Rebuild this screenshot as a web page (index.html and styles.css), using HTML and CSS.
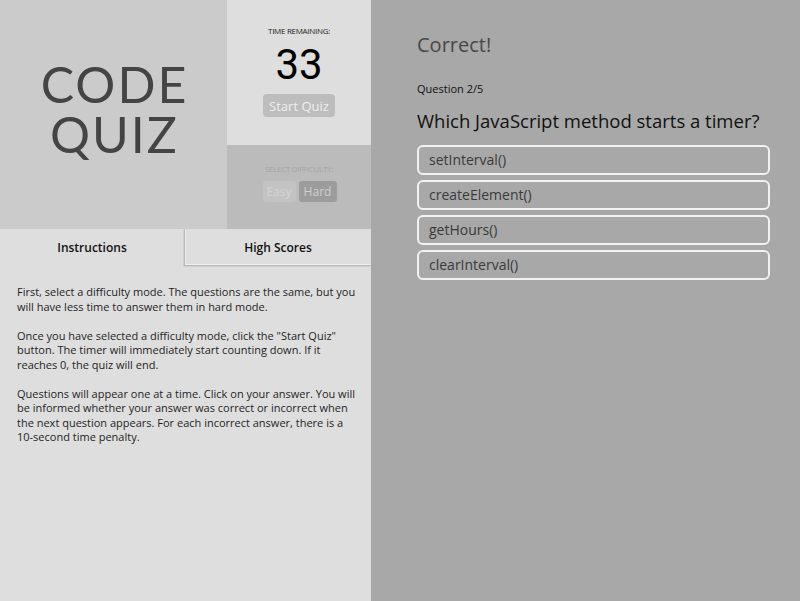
FILE: index.html
```html
<!DOCTYPE html>
<html>
<head>
<meta charset="utf-8">
<link rel="stylesheet" href="styles.css">
</head>
<body>
<div class="app">
  <aside class="side">
    <div class="top">
      <div class="logo"><h1 class="logo-text">CODE<br>QUIZ</h1></div>
      <div class="controls">
        <div class="timer">
          <div class="label">TIME REMAINING:</div>
          <div class="count">33</div>
          <button class="start">Start Quiz</button>
        </div>
        <div class="difficulty">
          <div class="label dim">SELECT DIFFICULTY:</div>
          <div class="modes">
            <button class="mode easy">Easy</button>
            <button class="mode hard">Hard</button>
          </div>
        </div>
      </div>
    </div>
    <div class="tabs">
      <div class="tab active">Instructions</div>
      <div class="tab">High Scores</div>
    </div>
    <div class="instructions">
      <p>First, select a difficulty mode. The questions are the same, but you will have less time to answer them in hard mode.</p>
      <p>Once you have selected a difficulty mode, click the "Start Quiz" button. The timer will immediately start counting down. If it reaches 0, the quiz will end.</p>
      <p>Questions will appear one at a time. Click on your answer. You will be informed whether your answer was correct or incorrect when the next question appears. For each incorrect answer, there is a 10-second time penalty.</p>
    </div>
  </aside>
  <main class="main">
    <div class="feedback">Correct!</div>
    <div class="qnum">Question 2/5</div>
    <h2 class="question">Which JavaScript method starts a timer?</h2>
    <div class="answers">
      <button class="answer">setInterval()</button>
      <button class="answer">createElement()</button>
      <button class="answer">getHours()</button>
      <button class="answer">clearInterval()</button>
    </div>
  </main>
</div>
</body>
</html>
```
FILE: styles.css
```css
* { box-sizing: border-box; }
html, body { margin: 0; padding: 0; height: 100%; }
body { font-family: "Open Sans", sans-serif; }
.app { display: grid; grid-template-columns: 371px 1fr; height: 601px; }
.side { background: #dedede; display: flex; flex-direction: column; }
.top { display: grid; grid-template-columns: 227px 144px; height: 229px; }
.logo { background: #cbcbcb; display: flex; align-items: center; justify-content: center; padding-bottom: 12px; padding-left: 2px; }
.logo-text { margin: 0; text-align: center; font-family: "Lato", sans-serif; font-weight: 400; font-size: 50px; line-height: 50px; color: #444; letter-spacing: 2px; }
.controls { display: grid; grid-template-rows: 145px 84px; }
.timer { background: #dedede; display: flex; flex-direction: column; align-items: center; padding-top: 26px; }
.label { font-size: 8px; color: #222; letter-spacing: -0.3px; line-height: 10px; }
.label.dim { color: #a4a4a4; }
.count { font-family: "Roboto", sans-serif; font-size: 42px; line-height: 46px; color: #000; margin-top: 6px; }
.start { margin-top: 6px; background: #bdbdbd; color: #f0f0f0; border: none; border-radius: 4px; font-family: "Open Sans", sans-serif; font-size: 13px; width: 72px; height: 23px; padding: 0; }
.difficulty { background: #bbbbbb; display: flex; flex-direction: column; align-items: center; padding-top: 19px; }
.modes { display: flex; gap: 3px; margin-top: 7px; padding-left: 1px; }
.mode { border: none; border-radius: 3px; font-family: "Open Sans", sans-serif; font-size: 12px; height: 21px; padding: 0; }
.easy { background: #c3c3c3; color: #d3d3d3; width: 33px; }
.hard { background: #9c9c9c; color: #cfcfcf; width: 38px; }
.tabs { display: grid; grid-template-columns: 184px 187px; height: 37px; }
.tab { display: flex; align-items: center; justify-content: center; font-size: 12px; font-weight: 600; color: #111; padding-bottom: 1px; }
.tab + .tab { border-left: 1px solid #b8b8b8; border-bottom: 1px solid #b8b8b8; box-shadow: inset 1px -1px 0 #f0f0f0, -1px 1px 0 #cfcfcf; padding-top: 1px; }
.instructions { padding: 19px 14px 0 17px; font-size: 11px; line-height: 14.5px; color: #1e1e1e; }
.instructions p { margin: 0 0 14.5px; }
.main { background: #a8a8a8; padding: 31px 30px 0 46px; }
.feedback { font-size: 20px; color: #474747; line-height: 28px; }
.qnum { font-size: 11px; color: #111; margin-top: 22px; line-height: 16px; }
.question { font-size: 18.5px; font-weight: 400; color: #111; margin: 11px 0 0; line-height: 26px; }
.answers { display: flex; flex-direction: column; gap: 5px; margin-top: 11px; }
.answer { text-align: left; height: 30px; background: transparent; border: 2px solid #f2f2f2; border-radius: 6px; font-family: "Open Sans", sans-serif; font-size: 14px; color: #3a3a3a; padding: 0 0 1px 10px; }
```
